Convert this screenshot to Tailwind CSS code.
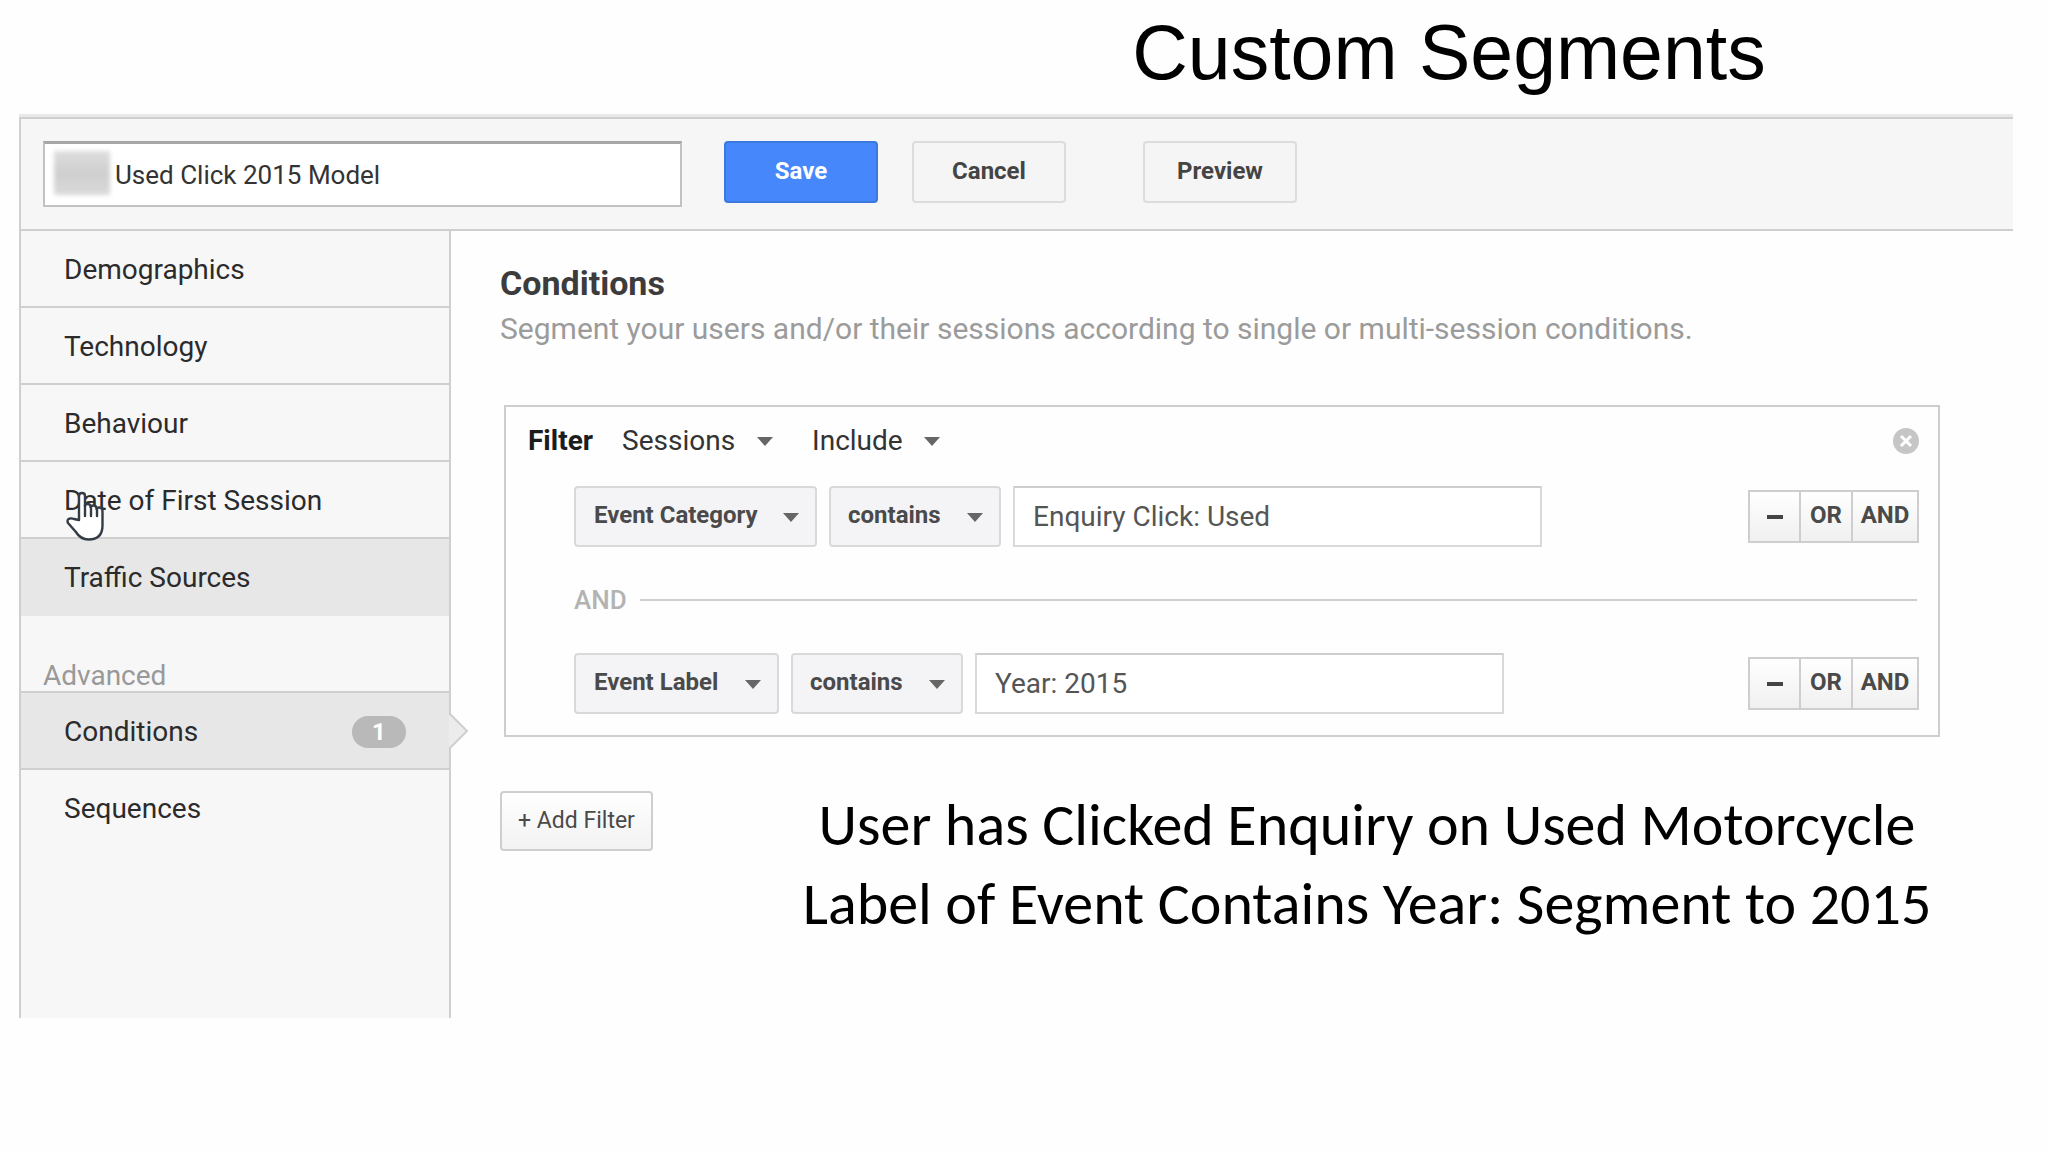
<!DOCTYPE html>
<html lang="en">
<head>
  <meta charset="UTF-8">
  <meta name="viewport" content="width=device-width, initial-scale=1">
  <title>Custom Segments</title>
  <script src="https://cdn.jsdelivr.net/npm/@tailwindcss/browser@4"></script>
</head>
<body class="bg-[#fefefe] font-['Roboto',sans-serif] text-[#333]">

  <!-- Title -->
  <h1 class="ml-[41.5%] mb-[10px] text-center text-[77px] leading-[104px] text-black font-['Liberation_Sans',sans-serif]">Custom Segments</h1>

  <!-- Segment editor -->
  <div class="ml-[19px] mr-[35px] border-t-3 border-[#e9e9e9]">

    <!-- Toolbar -->
    <header class="flex items-start border-y-2 border-l-2 border-[#cfcfcf] bg-[#f6f6f7] pt-[22px] pb-[22px] pl-[22px]">
      <div class="relative">
        <input type="text" aria-label="Segment name" value="Used Click 2015 Model" class="block w-[639px] h-[66px] border-2 border-t-3 border-[#c2c2c2] border-t-[#a6a6a6] bg-white pl-[70px] text-[26px]">
        <span class="absolute left-[11px] top-[10px] w-14 h-11 bg-linear-to-b from-[#dedede] via-[#cfcfcf] to-[#dadada] blur-[2px]"></span>
      </div>
      <button type="button" class="ml-[42px] w-[154px] h-[62px] rounded border-2 border-[#3b78e0] bg-[#4688fb] pb-0.5 text-2xl font-bold text-white">Save</button>
      <button type="button" class="ml-[34px] w-[154px] h-[62px] rounded border-2 border-[#dcdcdc] bg-[#f5f5f5] pb-0.5 text-2xl font-bold text-[#444]">Cancel</button>
      <button type="button" class="ml-[77px] w-[154px] h-[62px] rounded border-2 border-[#dcdcdc] bg-[#f5f5f5] pb-0.5 text-2xl font-bold text-[#444]">Preview</button>
    </header>

    <div class="flex min-h-[787px]">

      <!-- Sidebar -->
      <nav class="relative w-[432px] shrink-0 border-x-2 border-[#cfcfcf] bg-[#f7f7f8] text-[28px] text-[#2b2b2b]">
        <ul>
          <li><a href="#" class="flex h-[77px] items-center border-b-2 border-[#cfcfcf] pt-0.5 pl-[43px]">Demographics</a></li>
          <li><a href="#" class="flex h-[77px] items-center border-b-2 border-[#cfcfcf] pt-0.5 pl-[43px]">Technology</a></li>
          <li><a href="#" class="flex h-[77px] items-center border-b-2 border-[#cfcfcf] pt-0.5 pl-[43px]">Behaviour</a></li>
          <li class="relative">
            <a href="#" class="flex h-[77px] items-center border-b-2 border-[#cfcfcf] pt-0.5 pl-[43px]">Date of First Session</a>
            <!-- Hand pointer -->
            <svg class="absolute z-10 left-[44px] top-[28px] w-[42px] h-[52px]" viewBox="0 0 42 52" fill="#fff" stroke="#333b45" stroke-width="2.4" stroke-linejoin="round" stroke-linecap="round">
              <path d="M14 30V6q0-3 3-3t3 3v10q0-2 2.500-2t3 2v1q.5-1.500 3-1.500t3 2.500v1q.5-1.500 2.500-1.500 3.500 0 3.500 4v14q0 14-14 14-8 0-13-8L3 33q-1.500-4 2-4.500 2-.5 4 .5z"/>
              <path d="M20 15v11M26 17v9M32 19v7" fill="none"/>
            </svg>
          </li>
          <li><a href="#" class="flex h-[77px] items-center bg-[#e7e7e8] pl-[43px]">Traffic Sources</a></li>
        </ul>
        <h2 class="flex h-[77px] items-end border-b-2 border-[#cfcfcf] pl-[22px] leading-[30px] text-[#999]">Advanced</h2>
        <ul>
          <li class="relative">
            <a href="#" class="flex h-[77px] items-center border-b-2 border-[#cfcfcf] bg-[#e7e7e8] pt-0.5 pl-[43px] pr-[43px]">
              Conditions
              <span class="ml-auto flex h-8 w-[54px] items-center justify-center rounded-full bg-[#b9b9ba] text-2xl font-bold text-white">1</span>
            </a>
            <!-- Arrow pointing at the open section -->
            <svg class="absolute left-full top-[18px] w-[20px] h-[40px]" viewBox="0 0 20 40">
              <path d="M0 2L18 20L0 38" fill="#ececed" stroke="#cfcfcf" stroke-width="2"/>
            </svg>
          </li>
          <li><a href="#" class="flex h-[77px] items-center pl-[43px]">Sequences</a></li>
        </ul>
      </nav>

      <!-- Conditions -->
      <main class="flex-1 pl-[49px] pr-[73px] pt-[32px]">
        <h2 class="text-[34px] leading-[40px] font-bold text-[#3c3c3c]">Conditions</h2>
        <p class="text-[30px] leading-[52px] text-[#9b9b9b]">Segment your users and/or their sessions according to single or multi-session conditions.</p>

        <section class="mt-[50px] ml-1 border-2 border-[#cfcdd0] pl-[22px] pr-[19px] pb-[21px]">
          <div class="flex h-[79px] items-center pb-[12px] text-[28px]">
            <h3 class="font-bold text-[#1c1c1c]">Filter</h3>
            <div class="relative ml-[29px]">
              <select aria-label="Scope" class="block w-[151px] appearance-none">
                <option>Sessions</option>
                <option>Users</option>
              </select>
              <svg class="pointer-events-none absolute right-0 top-[17px] w-4 h-[9px]" viewBox="0 0 16 9" fill="#666"><path d="M0 0h16L8 9z"/></svg>
            </div>
            <div class="relative ml-[39px]">
              <select aria-label="Mode" class="block w-[128px] appearance-none">
                <option>Include</option>
                <option>Exclude</option>
              </select>
              <svg class="pointer-events-none absolute right-0 top-[17px] w-4 h-[9px]" viewBox="0 0 16 9" fill="#666"><path d="M0 0h16L8 9z"/></svg>
            </div>
            <button type="button" aria-label="Remove filter" class="ml-auto">
              <svg class="w-[26px] h-[26px]" viewBox="0 0 26 26">
                <circle cx="13" cy="13" r="13" fill="#c6c6c7"/>
                <path d="M8 8L18 18M18 8L8 18" stroke="#fff" stroke-width="3"/>
              </svg>
            </button>
          </div>

          <div class="flex items-center pl-[46px]">
            <div class="relative">
              <select aria-label="Dimension" class="block w-[243px] h-[61px] appearance-none rounded border-2 border-[#dad8db] bg-[#f4f3f5] pl-[18px] pb-1 text-2xl font-bold text-[#4a4a4a]">
                <option>Event Category</option>
              </select>
              <svg class="pointer-events-none absolute right-[18px] top-[27px] w-4 h-[9px]" viewBox="0 0 16 9" fill="#666"><path d="M0 0h16L8 9z"/></svg>
            </div>
            <div class="relative ml-3">
              <select aria-label="Match type" class="block w-[172px] h-[61px] appearance-none rounded border-2 border-[#dad8db] bg-[#f4f3f5] pl-[17px] pb-1 text-2xl font-bold text-[#4a4a4a]">
                <option>contains</option>
              </select>
              <svg class="pointer-events-none absolute right-[18px] top-[27px] w-4 h-[9px]" viewBox="0 0 16 9" fill="#666"><path d="M0 0h16L8 9z"/></svg>
            </div>
            <input type="text" aria-label="Value" value="Enquiry Click: Used" class="ml-3 w-[529px] h-[61px] border-2 border-[#dad8db] border-t-[#cfcdd0] bg-white pl-[18px] text-[28px] text-[#555]">
            <div class="ml-auto flex h-[53px] divide-x-2 divide-[#cfcdd0] border-2 border-[#cfcdd0] bg-linear-to-b from-white to-[#f0f0f0] text-2xl font-bold text-[#4a4a4a]">
              <button type="button" aria-label="Remove condition" class="flex w-[51px] items-center justify-center">
                <svg class="w-4 h-1" viewBox="0 0 16 4"><path d="M0 2h16" stroke="#444" stroke-width="4"/></svg>
              </button>
              <button type="button" class="w-[52px] pb-1">OR</button>
              <button type="button" class="w-[64px] pb-1">AND</button>
            </div>
          </div>

          <div class="flex h-[106px] items-center pl-[46px]">
            <span class="text-[26px] font-medium text-[#b3b3b3]">AND</span>
            <hr class="ml-[13px] mr-[2px] flex-1 border-t-2 border-[#cfcdd0]">
          </div>

          <div class="flex items-center pl-[46px]">
            <div class="relative">
              <select aria-label="Dimension" class="block w-[205px] h-[61px] appearance-none rounded border-2 border-[#dad8db] bg-[#f4f3f5] pl-[18px] pb-1 text-2xl font-bold text-[#4a4a4a]">
                <option>Event Label</option>
              </select>
              <svg class="pointer-events-none absolute right-[18px] top-[27px] w-4 h-[9px]" viewBox="0 0 16 9" fill="#666"><path d="M0 0h16L8 9z"/></svg>
            </div>
            <div class="relative ml-3">
              <select aria-label="Match type" class="block w-[172px] h-[61px] appearance-none rounded border-2 border-[#dad8db] bg-[#f4f3f5] pl-[17px] pb-1 text-2xl font-bold text-[#4a4a4a]">
                <option>contains</option>
              </select>
              <svg class="pointer-events-none absolute right-[18px] top-[27px] w-4 h-[9px]" viewBox="0 0 16 9" fill="#666"><path d="M0 0h16L8 9z"/></svg>
            </div>
            <input type="text" aria-label="Value" value="Year: 2015" class="ml-3 w-[529px] h-[61px] border-2 border-[#dad8db] border-t-[#cfcdd0] bg-white pl-[18px] text-[28px] text-[#555]">
            <div class="ml-auto flex h-[53px] divide-x-2 divide-[#cfcdd0] border-2 border-[#cfcdd0] bg-linear-to-b from-white to-[#f0f0f0] text-2xl font-bold text-[#4a4a4a]">
              <button type="button" aria-label="Remove condition" class="flex w-[51px] items-center justify-center">
                <svg class="w-4 h-1" viewBox="0 0 16 4"><path d="M0 2h16" stroke="#444" stroke-width="4"/></svg>
              </button>
              <button type="button" class="w-[52px] pb-1">OR</button>
              <button type="button" class="w-[64px] pb-1">AND</button>
            </div>
          </div>
        </section>

        <div class="mt-12 flex items-start">
          <button type="button" class="mt-[6px] w-[153px] h-[60px] shrink-0 rounded border-2 border-[#cfcdd0] bg-linear-to-b from-white to-[#f2f2f3] text-[23px] text-[#4a4a4a]">+ Add Filter</button>
          <div class="ml-[141px] flex-1 text-center text-[60px] leading-[79px] whitespace-nowrap text-black font-['Carlito','Lato',sans-serif]">
            <p>User has Clicked Enquiry on Used Motorcycle</p>
            <p>Label of Event Contains Year: Segment to 2015</p>
          </div>
        </div>
      </main>
    </div>
  </div>

</body>
</html>
